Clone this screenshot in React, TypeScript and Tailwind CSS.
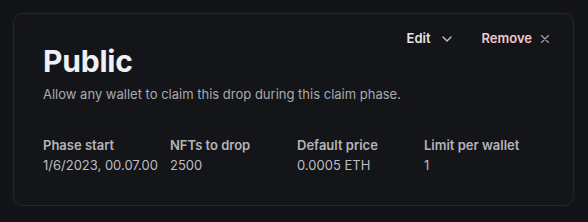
import React from "react";

function Chevron() {
  return (
    <svg width="16" height="16" viewBox="0 0 24 24" fill="none" stroke="currentColor" strokeWidth="2" strokeLinecap="round" strokeLinejoin="round">
      <path d="M6 9l6 6 6-6" />
    </svg>
  );
}

function XIcon() {
  return (
    <svg width="14" height="14" viewBox="0 0 24 24" fill="none" stroke="currentColor" strokeWidth="2" strokeLinecap="round" strokeLinejoin="round">
      <path d="M18 6L6 18M6 6l12 12" />
    </svg>
  );
}

const stats = [
  { label: "Phase start", value: "1/6/2023, 00.07.00" },
  { label: "NFTs to drop", value: "2500" },
  { label: "Default price", value: "0.0005 ETH" },
  { label: "Limit per wallet", value: "1" },
];

export default function App() {
  return (
    <div className="w-[588px] h-[222px] bg-[#131417] p-[13px] font-['Inter',sans-serif]">
      <div className="h-[193px] w-[561px] rounded-[10px] border border-[#25262a] bg-[#141519] px-[29px] pt-[7px]">
        <div className="flex items-start justify-between">
          <div className="pt-[22px]">
            <h1 className="text-[30px] leading-[36px] font-bold text-[#f0f0f2] tracking-[-0.2px]">Public</h1>
            <p className="mt-[5px] whitespace-nowrap text-[13px] leading-[20px] text-[#a9aaaf]">
              Allow any wallet to claim this drop during this claim phase.
            </p>
          </div>
          <div className="flex items-center h-[36px] mr-[-8px]">
            <button className="flex items-center gap-[8px] text-[13px] font-semibold text-[#e6e6e8]">
              <span>Edit</span>
              <span className="text-[#c4c4c8]"><Chevron /></span>
            </button>
            <button className="ml-[27px] flex items-center gap-[6px] text-[13px] font-semibold text-[#f2c8c8]">
              <span>Remove</span>
              <span className="text-[#a3a3a8]"><XIcon /></span>
            </button>
          </div>
        </div>
        <div className="mt-[31px] grid grid-cols-[127px_127px_127px_127px]">
          {stats.map((s) => (
            <div key={s.label} className="flex flex-col">
              <span className="text-[13px] leading-[20px] font-semibold text-[#b4b4b8]">{s.label}</span>
              <span className="text-[13px] leading-[20px] text-[#bdbdc1]">{s.value}</span>
            </div>
          ))}
        </div>
      </div>
    </div>
  );
}
